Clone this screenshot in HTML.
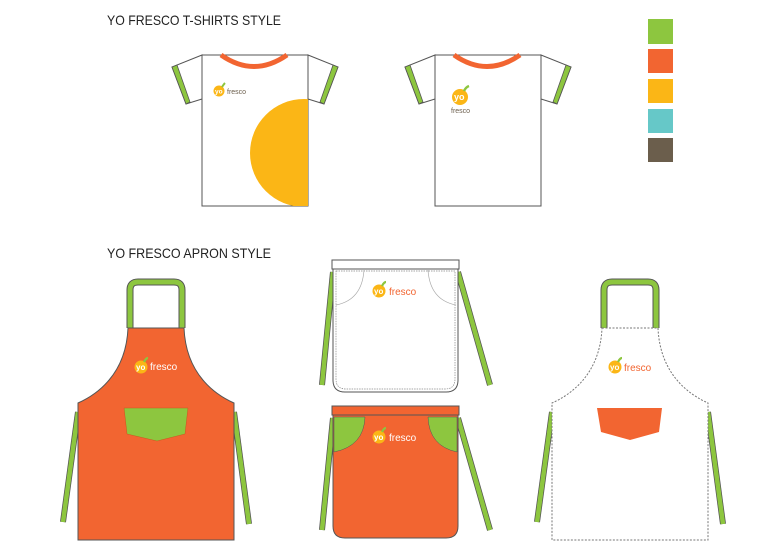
<!DOCTYPE html>
<html><head><meta charset="utf-8"><style>
html,body{margin:0;padding:0;background:#fff;width:780px;height:550px;overflow:hidden}
svg{display:block}
text{font-family:"Liberation Sans",sans-serif}
</style></head><body>
<svg width="780" height="550" viewBox="0 0 780 550" xmlns="http://www.w3.org/2000/svg">
<defs>
<g id="apron">
  <path d="M-26,328 L-26,290 Q-26,282 -18,282 L18,282 Q26,282 26,290 L26,328" fill="none" stroke="#555" stroke-width="7" stroke-linejoin="round"/>
  <path d="M-26,328 L-26,290 Q-26,282 -18,282 L18,282 Q26,282 26,290 L26,328" fill="none" stroke="#8dc63f" stroke-width="5" stroke-linejoin="round"/>
  <path d="M-78,412 L-93,522" stroke="#555" stroke-width="6"/>
  <path d="M-78,412 L-93,522" stroke="#8dc63f" stroke-width="4.5"/>
  <path d="M78,412 L93,524" stroke="#555" stroke-width="6"/>
  <path d="M78,412 L93,524" stroke="#8dc63f" stroke-width="4.5"/>
</g>
<path id="bib" d="M-28,328 L28,328 C30,375 60,395 78,403 L78,540 L-78,540 L-78,403 C-60,395 -30,375 -28,328 Z"/>
</defs>

<text x="107" y="25" font-size="14" fill="#222" textLength="174" lengthAdjust="spacingAndGlyphs">YO FRESCO T-SHIRTS STYLE</text>
<text x="107" y="258" font-size="14" fill="#222" textLength="164" lengthAdjust="spacingAndGlyphs">YO FRESCO APRON STYLE</text>

<rect x="648" y="19" width="25" height="25" fill="#8dc63f"/>
<rect x="648" y="49" width="25" height="24" fill="#f26531"/>
<rect x="648" y="79" width="25" height="24" fill="#fbb616"/>
<rect x="648" y="109" width="25" height="24" fill="#66c8c8"/>
<rect x="648" y="138" width="25" height="24" fill="#6b5e4c"/>

<g>
  <path d="M202,55 L172,67 L186,104 L202,99 Z" fill="#fff" stroke="#555" stroke-width="1"/>
  <path d="M308,55 L338,67 L324,104 L308,99 Z" fill="#fff" stroke="#555" stroke-width="1"/>
  <path d="M172,67 L177,65 L190,102 L186,104 Z" fill="#8dc63f" stroke="#555" stroke-width="0.8"/>
  <path d="M338,67 L333,65 L320,102 L324,104 Z" fill="#8dc63f" stroke="#555" stroke-width="0.8"/>
  <rect x="202" y="55" width="106" height="151" fill="#fff" stroke="#555" stroke-width="1"/>
  <clipPath id="c1"><rect x="202" y="55" width="106" height="151"/></clipPath>
  <circle cx="304" cy="153" r="54" fill="#fbb616" clip-path="url(#c1)"/>
  <path d="M221,55 Q254,78 287,55" fill="none" stroke="#f26531" stroke-width="5"/>
  <g transform="translate(219,91)"><circle r="5.5" fill="#fbb616"/><path d="M3,-4 q2,-3 3,-4" stroke="#8dc63f" stroke-width="2" fill="none"/><text x="-4" y="2.5" font-size="6.5" fill="#fff" font-weight="bold">yo</text></g>
  <text x="227" y="94" font-size="7" fill="#6b5e4c">fresco</text>
</g>
<g transform="translate(233,0)">
  <path d="M202,55 L172,67 L186,104 L202,99 Z" fill="#fff" stroke="#555" stroke-width="1"/>
  <path d="M308,55 L338,67 L324,104 L308,99 Z" fill="#fff" stroke="#555" stroke-width="1"/>
  <path d="M172,67 L177,65 L190,102 L186,104 Z" fill="#8dc63f" stroke="#555" stroke-width="0.8"/>
  <path d="M338,67 L333,65 L320,102 L324,104 Z" fill="#8dc63f" stroke="#555" stroke-width="0.8"/>
  <rect x="202" y="55" width="106" height="151" fill="#fff" stroke="#555" stroke-width="1"/>
  <path d="M221,55 Q254,78 287,55" fill="none" stroke="#f26531" stroke-width="5"/>
  <circle cx="227" cy="97" r="8" fill="#fbb616"/>
  <path d="M231,91 q2,-4 5,-5" stroke="#8dc63f" stroke-width="2.5" fill="none"/>
  <text x="221" y="100" font-size="9" fill="#fff" font-weight="bold">yo</text>
  <text x="218" y="113" font-size="7" fill="#6b5e4c">fresco</text>
</g>

<g transform="translate(156,0)">
  <use href="#apron"/>
  <use href="#bib" fill="#f26531" stroke="#555" stroke-width="1"/>
  <path d="M-32,408 L32,408 L29,434 L1,441 L-29,434 Z" fill="#8dc63f" stroke="#c8571f" stroke-width="0.5"/>
  <g transform="translate(-15,367)"><circle r="6.5" fill="#fbb616"/><path d="M3,-5 q2,-4 4,-4" stroke="#8dc63f" stroke-width="2.2" fill="none"/><text x="-5" y="3" font-size="8" fill="#fff" font-weight="bold">yo</text></g>
  <text x="-6" y="370" font-size="10" fill="#fff">fresco</text>
</g>

<g transform="translate(630,0)">
  <use href="#apron"/>
  <use href="#bib" fill="#fff" stroke="#777" stroke-width="1" stroke-dasharray="2,1.5"/>
  <path d="M-33,408 L32,408 L29,432 L0,440 L-29,432 Z" fill="#f26531"/>
  <g transform="translate(-15,367)"><circle r="6.5" fill="#fbb616"/><path d="M3,-5 q2,-4 4,-4" stroke="#8dc63f" stroke-width="2.2" fill="none"/><text x="-5" y="3" font-size="8" fill="#fff" font-weight="bold">yo</text></g>
  <text x="-6" y="371" font-size="10" fill="#f26531">fresco</text>
</g>

<g>
  <path d="M333,272 L322,385" stroke="#555" stroke-width="6"/><path d="M333,272 L322,385" stroke="#8dc63f" stroke-width="4.5"/>
  <path d="M458,272 L490,385" stroke="#555" stroke-width="6"/><path d="M458,272 L490,385" stroke="#8dc63f" stroke-width="4.5"/>
  <rect x="332" y="260" width="127" height="9" fill="#fff" stroke="#555" stroke-width="1"/>
  <path d="M333,269 L458,269 L458,380 Q458,392 446,392 L345,392 Q333,392 333,380 Z" fill="#fff" stroke="#555" stroke-width="1"/>
  <path d="M336,271 L455,271 L455,379 Q455,389 445,389 L346,389 Q336,389 336,379 Z" fill="none" stroke="#888" stroke-width="0.7" stroke-dasharray="1.5,1"/>
  <path d="M364,270 Q362,300 336,305" fill="none" stroke="#aaa" stroke-width="0.7"/>
  <path d="M428,270 Q430,300 456,305" fill="none" stroke="#aaa" stroke-width="0.7"/>
  <g transform="translate(379,291)"><circle r="6.5" fill="#fbb616"/><path d="M3,-5 q2,-4 4,-4" stroke="#8dc63f" stroke-width="2.2" fill="none"/><text x="-5" y="3" font-size="8" fill="#fff" font-weight="bold">yo</text></g>
  <text x="389" y="295" font-size="10" fill="#f26531">fresco</text>
</g>
<g>
  <path d="M333,418 L322,530" stroke="#555" stroke-width="6"/><path d="M333,418 L322,530" stroke="#8dc63f" stroke-width="4.5"/>
  <path d="M458,418 L490,530" stroke="#555" stroke-width="6"/><path d="M458,418 L490,530" stroke="#8dc63f" stroke-width="4.5"/>
  <rect x="332" y="406" width="127" height="9" fill="#f26531" stroke="#555" stroke-width="1"/>
  <path d="M333,415 L458,415 L458,526 Q458,538 446,538 L345,538 Q333,538 333,526 Z" fill="#f26531" stroke="#555" stroke-width="1"/>
  <path d="M334,417 L365,417 Q364,446 334,452 Z" fill="#8dc63f" stroke="#555" stroke-width="0.5"/>
  <path d="M457,417 L428,417 Q429,446 457,452 Z" fill="#8dc63f" stroke="#555" stroke-width="0.5"/>
  <g transform="translate(379,437)"><circle r="6.5" fill="#fbb616"/><path d="M3,-5 q2,-4 4,-4" stroke="#8dc63f" stroke-width="2.2" fill="none"/><text x="-5" y="3" font-size="8" fill="#fff" font-weight="bold">yo</text></g>
  <text x="389" y="441" font-size="10" fill="#fff">fresco</text>
</g>
</svg>
</body></html>
